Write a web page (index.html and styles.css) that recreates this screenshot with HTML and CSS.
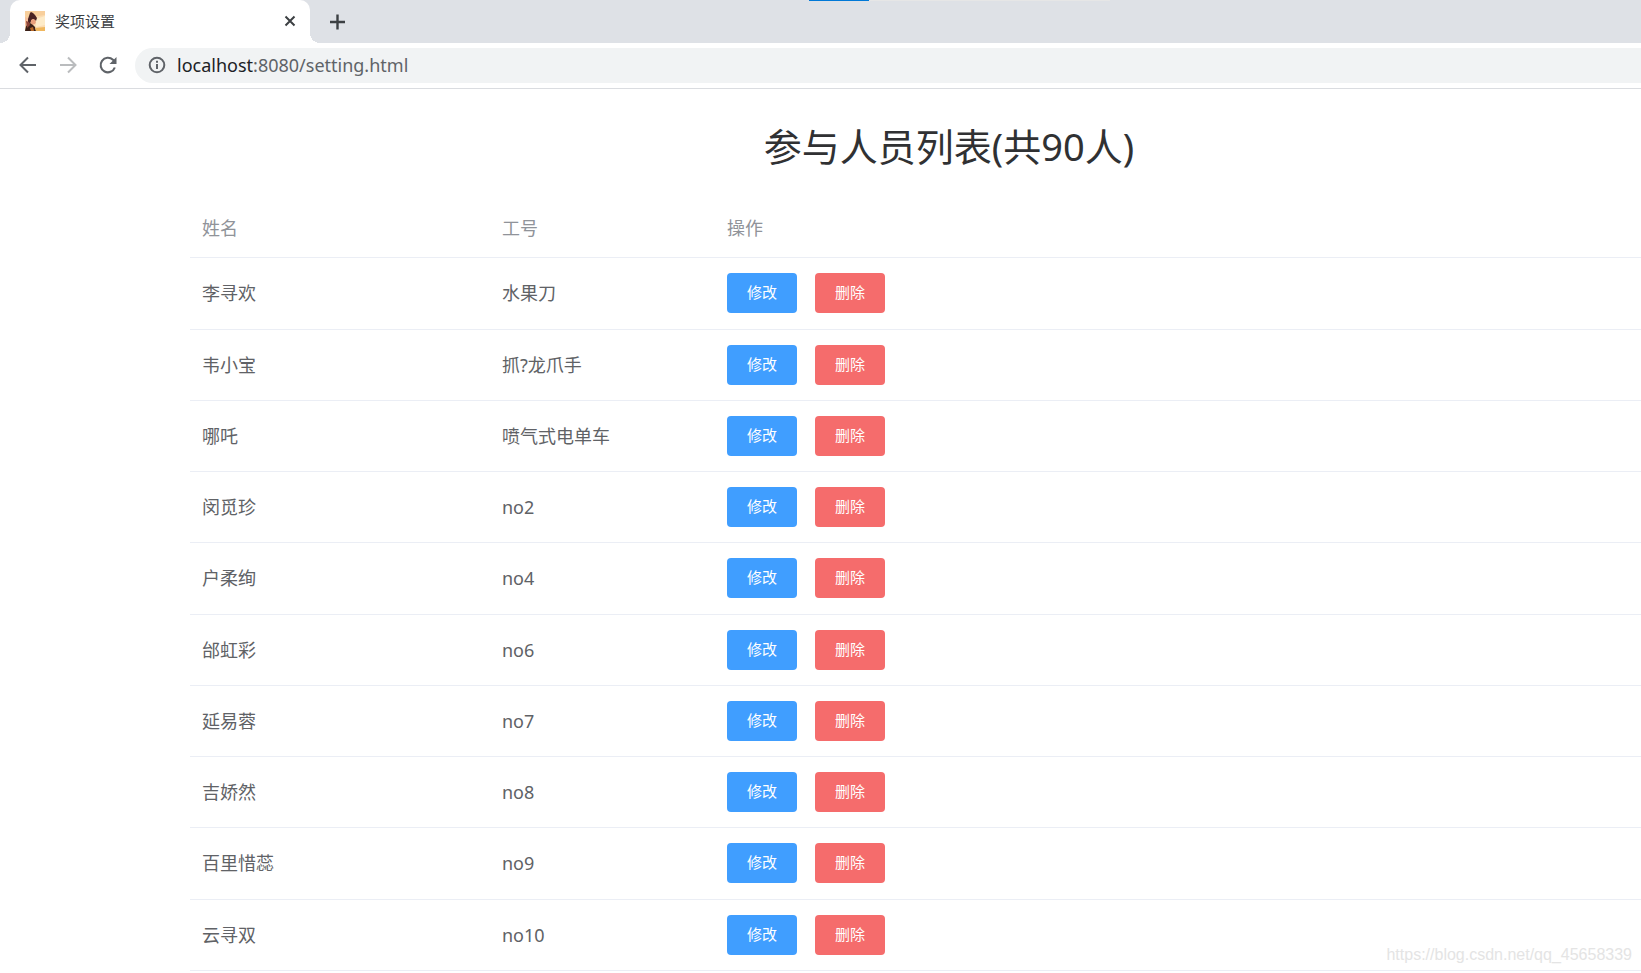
FILE: index.html
```html
<!DOCTYPE html>
<html lang="zh-CN">
<head>
<meta charset="utf-8">
<title>奖项设置</title>
<link rel="stylesheet" href="styles.css">
</head>
<body>
<header class="browser">
  <div class="progress" aria-hidden="true"><span class="progress-done"></span></div>
  <div class="tab-strip">
    <div class="tab">
      <svg class="favicon" viewBox="0 0 20 20" aria-hidden="true">
        <rect width="20" height="20" fill="#fbdcb2"/>
        <path d="M0 0h20v4L0 7z" fill="#f8cf9c"/>
        <path d="M11 8l9-3v9l-9 2z" fill="#fdebc9"/>
        <path d="M0 6l3 1 1 5-4 3z" fill="#f6c09c"/>
        <path d="M5 2l1-1 2 1 2 2 2 3-1 3-1-1-2-1-2 2-1 3-2-2V8l1-3z" fill="#4a2323"/>
        <path d="M6 9l2-1 2 1 1 2-1 2-3 1-1-1z" fill="#e9a07c"/>
        <path d="M0 20l1-5 4-3 3 2 2 2 1 4z" fill="#3b2018"/>
        <path d="M1 10l3 1 1 3-3 3z" fill="#8c4438"/>
        <path d="M10 17l10-1v4h-9z" fill="#f0b75e"/>
        <path d="M5 17l3-1 1 4H6z" fill="#b8692a"/>
      </svg>
      <span class="tab-title">奖项设置</span>
      <button class="tab-button close" type="button" aria-label="关闭标签页">
        <svg width="12" height="12" viewBox="0 0 12 12"><path d="M1.5 1.500l9 9M10.500 1.500l-9 9" stroke="#3c4043" stroke-width="2" fill="none"/></svg>
      </button>
    </div>
    <button class="tab-button add" type="button" aria-label="打开新的标签页">
      <svg width="16" height="16" viewBox="0 0 16 16"><path d="M7.500 .5v15M0 8h15" stroke="#3c4043" stroke-width="2.400" fill="none"/></svg>
    </button>
  </div>
  <nav class="toolbar">
    <button class="nav-button" type="button" aria-label="后退">
      <svg width="20" height="20" viewBox="0 0 20 20"><path d="M18 10H3M10 2.500L2.500 10l7.500 7.500" stroke="#5f6368" stroke-width="2" fill="none"/></svg>
    </button>
    <button class="nav-button" type="button" aria-label="前进" disabled>
      <svg width="20" height="20" viewBox="0 0 20 20"><path d="M2 10h15M10 2.500L17.500 10 10 17.500" stroke="#babcbe" stroke-width="2" fill="none"/></svg>
    </button>
    <button class="nav-button" type="button" aria-label="重新加载">
      <svg width="20" height="20" viewBox="0 0 20 20"><path d="M16.800 12.500A7.300 7.300 0 1 1 15 4.800L17 6.800" stroke="#5f6368" stroke-width="2.100" fill="none"/><path d="M18.500 2v7h-7z" fill="#5f6368"/></svg>
    </button>
    <div class="address">
      <svg width="18" height="18" viewBox="0 0 18 18" aria-hidden="true"><circle cx="9" cy="9" r="7.300" stroke="#5f6368" stroke-width="2" fill="none"/><path d="M9 8v5M9 4.800v1.900" stroke="#5f6368" stroke-width="2"/></svg>
      <span class="url" role="textbox" aria-label="地址" tabindex="0"><span class="host">localhost</span>:8080/setting.html</span>
    </div>
  </nav>
</header>
<main class="page">
  <h1 class="title">参与人员列表(共90人)</h1>
  <table class="people">
    <colgroup><col class="col-name"><col class="col-number"><col></colgroup>
    <thead><tr><th scope="col">姓名</th><th scope="col">工号</th><th scope="col">操作</th></tr></thead>
    <tbody>
      <tr><td>李寻欢</td><td>水果刀</td><td><div class="actions"><button class="btn edit" type="button">修改</button><button class="btn delete" type="button">删除</button></div></td></tr>
      <tr><td>韦小宝</td><td>抓?龙爪手</td><td><div class="actions"><button class="btn edit" type="button">修改</button><button class="btn delete" type="button">删除</button></div></td></tr>
      <tr><td>哪吒</td><td>喷气式电单车</td><td><div class="actions"><button class="btn edit" type="button">修改</button><button class="btn delete" type="button">删除</button></div></td></tr>
      <tr><td>闵觅珍</td><td>no2</td><td><div class="actions"><button class="btn edit" type="button">修改</button><button class="btn delete" type="button">删除</button></div></td></tr>
      <tr><td>户柔绚</td><td>no4</td><td><div class="actions"><button class="btn edit" type="button">修改</button><button class="btn delete" type="button">删除</button></div></td></tr>
      <tr><td>邰虹彩</td><td>no6</td><td><div class="actions"><button class="btn edit" type="button">修改</button><button class="btn delete" type="button">删除</button></div></td></tr>
      <tr><td>延易蓉</td><td>no7</td><td><div class="actions"><button class="btn edit" type="button">修改</button><button class="btn delete" type="button">删除</button></div></td></tr>
      <tr><td>吉娇然</td><td>no8</td><td><div class="actions"><button class="btn edit" type="button">修改</button><button class="btn delete" type="button">删除</button></div></td></tr>
      <tr><td>百里惜蕊</td><td>no9</td><td><div class="actions"><button class="btn edit" type="button">修改</button><button class="btn delete" type="button">删除</button></div></td></tr>
      <tr><td>云寻双</td><td>no10</td><td><div class="actions"><button class="btn edit" type="button">修改</button><button class="btn delete" type="button">删除</button></div></td></tr>
    </tbody>
  </table>
</main>
<div class="watermark">https://blog.csdn.net/qq_45658339</div>
</body>
</html>
```
FILE: styles.css
```css
* {
  box-sizing: border-box;
}

body {
  margin: 0;
  overflow-x: hidden;
  background: #fff;
  color: #606266;
  font-family: "Noto Sans", "Noto Sans CJK SC", sans-serif;
  font-size: 18px;
  font-weight: 370;
}

button {
  margin: 0;
  padding: 0;
  border: 0;
  background: none;
  font-family: inherit;
  font-weight: inherit;
  cursor: pointer;
}

svg {
  display: block;
  flex: none;
}

/* Browser frame */
.browser {
  position: relative;
  border-bottom: 1px solid #dadce0;
}

.progress {
  position: absolute;
  top: 0;
  left: 809px;
  width: 301px;
  height: 1px;
  background: #e6e6e6;
}

.progress-done {
  display: block;
  width: 60px;
  height: 1px;
  background: #0078d7;
}

.tab-strip {
  display: flex;
  align-items: center;
  height: 43px;
  padding-left: 10px;
  background: #dee1e6;
}

.tab {
  position: relative;
  display: flex;
  align-items: center;
  gap: 10px;
  width: 300px;
  height: 43px;
  padding: 0 14px 1px 15px;
  border-radius: 10px 10px 0 0;
  background: #fff;
}

.tab::before,
.tab::after {
  content: "";
  position: absolute;
  bottom: 0;
  width: 10px;
  height: 10px;
}

.tab::before {
  right: 100%;
  background: radial-gradient(circle at 0 0, #dee1e6 10px, #fff 10px);
}

.tab::after {
  left: 100%;
  background: radial-gradient(circle at 100% 0, #dee1e6 10px, #fff 10px);
}

.favicon {
  width: 20px;
  height: 20px;
}

.tab-title {
  flex: 1;
  color: #3c4043;
  font-size: 15px;
  line-height: 22px;
}

.tab-button {
  display: flex;
}

.add {
  margin-left: 20px;
}

.toolbar {
  display: flex;
  align-items: center;
  gap: 20px;
  height: 45px;
  padding: 0 0 1px 18px;
}

.address {
  display: flex;
  flex: 1;
  align-items: center;
  gap: 11px;
  height: 35px;
  margin-left: -3px;
  padding-left: 13px;
  border-radius: 18px 0 0 18px;
  background: #f1f3f4;
}

.url {
  color: #5f6368;
  line-height: 24px;
}

.host {
  color: #202124;
}

/* Page content, wider than the window */
.page {
  margin: 0 -67px 0 190px;
}

.title {
  margin: 0;
  padding: 29px 0 23px;
  color: #303133;
  font-size: 38px;
  font-weight: 370;
  line-height: 56px;
  text-align: center;
}

.people {
  width: 100%;
  border-collapse: separate;
  border-spacing: 0;
  table-layout: fixed;
}

.col-name {
  width: 300px;
}

.col-number {
  width: 225px;
}

.people th,
.people td {
  padding: 15px 12px;
  border-bottom: 1px solid #ebeef5;
  line-height: 24px;
  text-align: left;
  vertical-align: middle;
}

.people th {
  height: 61px;
  padding-top: 17px;
  color: #909399;
  font-weight: 370;
}

.people td {
  height: 71px;
}

.people tr:nth-child(4n + 1) td {
  height: 72px;
  padding-bottom: 16px;
}

.actions {
  display: flex;
  gap: 18px;
}

.btn {
  width: 70px;
  height: 40px;
  padding-bottom: 3px;
  border-radius: 4px;
  color: #fff;
  font-size: 15px;
  font-weight: 400;
}

.edit {
  background: #409eff;
}

.delete {
  background: #f56c6c;
}

.watermark {
  position: absolute;
  right: 9px;
  top: 946px;
  color: #e4e4e4;
  font: 16px/18px "Liberation Sans", sans-serif;
}
```
